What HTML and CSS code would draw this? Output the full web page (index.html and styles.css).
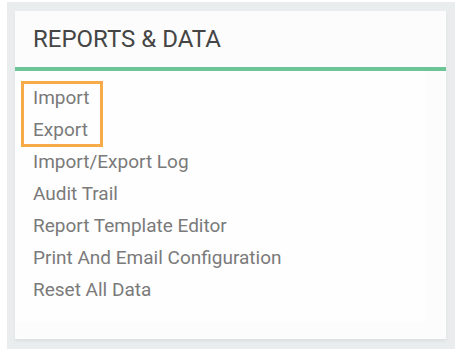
FILE: index.html
```html
<!DOCTYPE html>
<html lang="en">
<head>
  <meta charset="UTF-8">
  <meta name="viewport" content="width=device-width, initial-scale=1.0">
  <title>Reports &amp; Data</title>
  <link rel="stylesheet" href="styles.css">
</head>
<body>
  <div class="panel-wrap">
    <div class="panel">
      <div class="panel-header">
        <h2>REPORTS &amp; DATA</h2>
      </div>
      <div class="panel-body">
        <!-- Highlighted group -->
        <div class="link-group highlight">
          <a class="link" href="#">Import</a>
          <a class="link" href="#">Export</a>
        </div>
        <a class="link" href="#">Import/Export Log</a>
        <a class="link" href="#">Audit Trail</a>
        <a class="link" href="#">Report Template Editor</a>
        <a class="link" href="#">Print And Email Configuration</a>
        <a class="link" href="#">Reset All Data</a>
      </div>
    </div>
  </div>
</body>
</html>
```

FILE: styles.css
```css
body {
  font-family: Roboto, 'Liberation Sans', sans-serif;
  background-color: #ffffff;
  margin: 0;
}
.panel-wrap {
  background-color: #e9eded;
  margin: 2px 6px 0 7px;
  padding: 9px 9px 10px 8px;
}
.panel {
  background-color: #fcfcfc;
  padding-bottom: 17px;
  box-shadow: 0 2px 3px rgba(0, 0, 0, 0.06);
}
.panel-header {
  height: 56px;
  border-bottom: 4px solid #6cc497;
  padding-left: 18px;
  display: flex;
  align-items: center;
}
.panel-header h2 {
  margin: 0;
  font-size: 24px;
  font-weight: 400;
  color: #454545;
}
.panel-body {
  background-color: #fefefe;
  width: 410px;
  padding: 11px 0 16px 7px;
  box-sizing: border-box;
}
.link {
  display: block;
  line-height: 32px;
  font-size: 19px;
  color: #7a7a7a;
  text-decoration: none;
  padding-left: 11px;
}
.link-group {
  width: 80px;
}
.highlight {
  outline: 3px solid #f6aa4a;
  outline-offset: -2px;
}
```
